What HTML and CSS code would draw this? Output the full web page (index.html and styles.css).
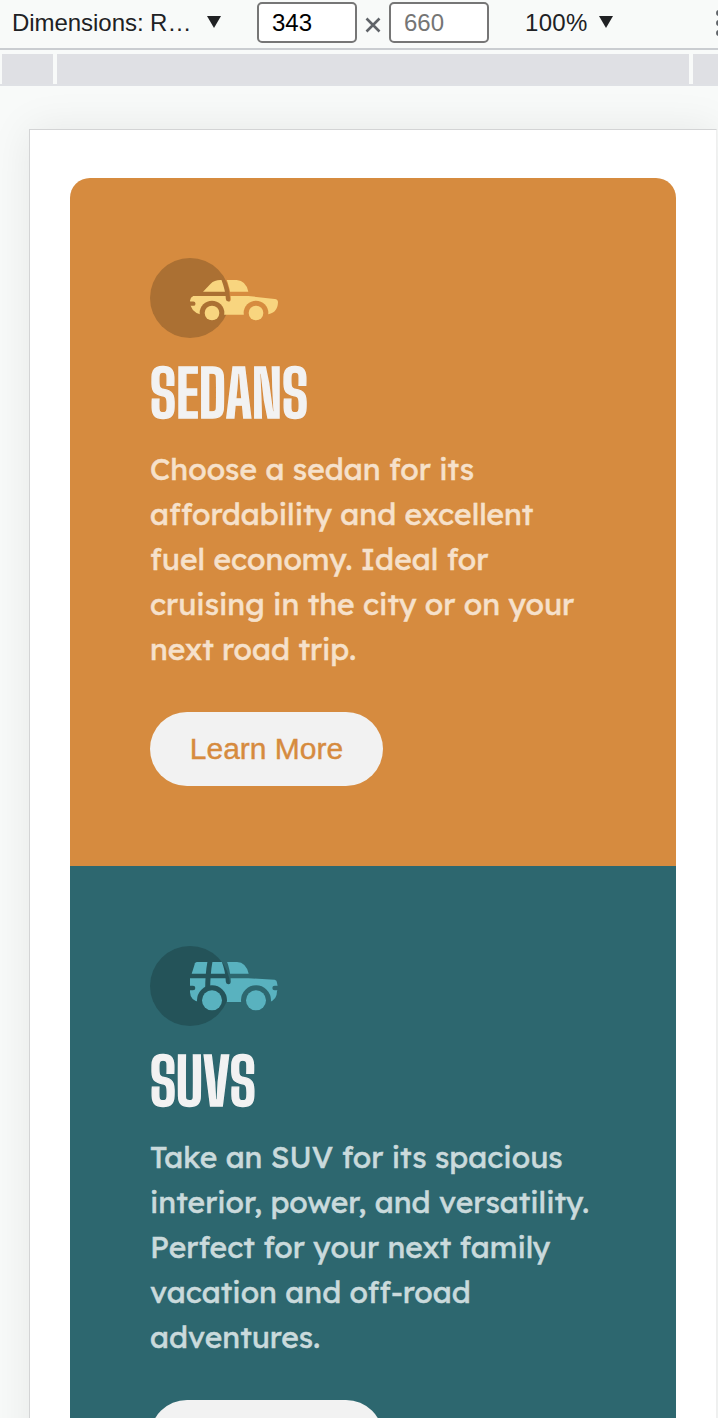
FILE: index.html
```html
<!DOCTYPE html>
<html lang="en">
<head>
<meta charset="utf-8">
<title>Car cards preview</title>
<link rel="stylesheet" href="styles.css">
</head>
<body>
<header class="toolbar">
  <span class="device">Dimensions: R…</span>
  <svg class="arrow" viewBox="0 0 14 12"><path d="M0 0H14L7 12Z"/></svg>
  <span class="size">343</span>
  <svg class="times" viewBox="0 0 16 16"><path d="M1.5 1.5 14.5 14.5M14.5 1.5 1.5 14.5"/></svg>
  <span class="size muted">660</span>
  <span class="percent">100%</span>
  <svg class="arrow" viewBox="0 0 14 12"><path d="M0 0H14L7 12Z"/></svg>
  <svg class="more" viewBox="0 0 6 28"><circle cx="3" cy="4" r="3"/><circle cx="3" cy="14" r="3"/><circle cx="3" cy="24" r="3"/></svg>
</header>
<div class="ruler"><i class="short"></i><i class="long"></i><i class="rest"></i></div>
<div class="stage">
<main class="screen">
  <section class="card sedan">
    <svg class="icon" viewBox="30 24 384 240">
      <mask id="sedan-cut" maskUnits="userSpaceOnUse" x="0" y="0" width="450" height="285"><rect width="450" height="285" fill="#fff"/><path d="M251 86Q264 120 265 147" fill="none" stroke="#000" stroke-width="15" stroke-linecap="round"/><path d="M146 161H160" stroke="#000" stroke-width="13" stroke-linecap="round"/><circle cx="216" cy="189" r="37"/><circle cx="348" cy="189" r="37"/></mask>
      <circle class="disc" cx="150" cy="144" r="120"/>
      <g class="car"><g mask="url(#sedan-cut)"><path d="M189 125 212 101Q223 90 241 90H290Q318 92 325 125Z"/><path d="M160 138H325L404 147Q414 148 414 157Q413 192 376 194H184Q150 186 150 152Q151 142 160 138Z"/></g><circle cx="216" cy="189" r="22"/><circle cx="348" cy="189" r="22"/></g>
    </svg>
    <h2>SEDANS</h2>
    <p>Choose a sedan for its<br>affordability and excellent<br>fuel economy. Ideal for<br>cruising in the city or on your<br>next road trip.</p>
    <button>Learn More</button>
  </section>
  <section class="card suv">
    <svg class="icon" viewBox="30 24 384 240">
      <mask id="suv-cut" maskUnits="userSpaceOnUse" x="0" y="0" width="450" height="285"><rect width="450" height="285" fill="#fff"/><path d="M252 68Q264 98 265 131M210 70Q203 108 203 156" fill="none" stroke="#000" stroke-width="15" stroke-linecap="round"/><path d="M146 150H159M404 150H418" stroke="#000" stroke-width="14" stroke-linecap="round"/><circle cx="216" cy="187" r="45"/><circle cx="348" cy="187" r="45"/></mask>
      <circle class="disc" cx="150" cy="144" r="120"/>
      <g class="car"><g mask="url(#suv-cut)"><path d="M155 107 165 76Q167 72 172 72H291Q318 73 326 107Z"/><path d="M150 121H325L404 125Q411 126 411 134L414 150L411 160Q411 187 387 192H180Q151 189 150 163Z"/></g><circle cx="216" cy="187" r="30"/><circle cx="348" cy="187" r="30"/></g>
    </svg>
    <h2>SUVS</h2>
    <p>Take an SUV for its spacious<br>interior, power, and versatility.<br>Perfect for your next family<br>vacation and off-road<br>adventures.</p>
    <button>Learn More</button>
  </section>
</main>
</div>
</body>
</html>
```
FILE: styles.css
```css
* { box-sizing: border-box; }
body { margin: 0; width: 718px; height: 1418px; overflow: hidden; background: #f8faf9; font-family: "Liberation Sans", Arial, sans-serif; }
.toolbar { display: flex; align-items: flex-start; height: 50px; border-bottom: 2px solid #cacdd1; padding-left: 12px; font-size: 24px; line-height: 46px; color: #202124; overflow: hidden; }
.toolbar > * { flex: none; }
.device { width: 195px; letter-spacing: -.05px; }
.arrow { width: 14px; height: 12px; margin: 16px 36px 0 0; fill: #202124; }
.size { width: 100px; height: 41px; margin-top: 2px; border: 2px solid #767676; border-radius: 5px; background: #fff; padding-left: 13px; line-height: 38px; color: #000; }
.muted { color: #757575; }
.times { width: 16px; height: 16px; margin: 17px 8px 0; fill: none; stroke: #5f6368; stroke-width: 2.6; }
.percent { width: 74px; margin-left: 36px; letter-spacing: .3px; }
.more { width: 6px; height: 28px; margin: 9px 0 0 67px; fill: #5f6368; }
.ruler { display: flex; gap: 4px; height: 36px; padding: 4px 0 0 2px; border-bottom: 2px solid #dfe1e5; }
.ruler i { background: #dfe0e4; }
.short { width: 51px; }
.long { width: 632px; }
.rest { width: 25px; }
.stage { height: 1332px; padding: 43px 0 0 29px; overflow: hidden; }
.screen { width: 688px; height: 1400px; border: 1px solid #d3d4d5; border-right-color: #efefef; background: #fff; padding: 48px 40px 0; box-shadow: 0 0 40px rgba(0, 0, 0, .08); }
.card { height: 688px; padding: 80px; }
.sedan { background: #d68b3f; border-radius: 20px 20px 0 0; color: #d68b3f; }
.suv { background: #2d676f; color: #2d676f; }
.icon { display: block; width: 128px; height: 80px; }
.disc { fill: #ab7033; }
.car { fill: #f8d57f; }
.suv .disc { fill: #245359; }
.suv .car { fill: #59b2bf; }
h2 { margin: 27px 0; height: 55px; padding-top: 1px; color: #f2f2f2; font: 700 64px/55px "Big Shoulders Display", "Big Shoulders", Inter, sans-serif; -webkit-text-stroke: 1.3px; }
p { margin: 0 0 40px; font: 400 30px/45px "Lexend Deca", Lexend, Inter, sans-serif; color: #f6e1cb; white-space: nowrap; -webkit-text-stroke: .5px; }
.suv p { color: #cadadc; }
button { display: block; width: 233px; height: 74px; padding: 0; border: 0; border-radius: 37px; background: #f2f2f2; color: inherit; font: 30px "Liberation Sans", Arial, sans-serif; -webkit-text-stroke: .4px; }
```
